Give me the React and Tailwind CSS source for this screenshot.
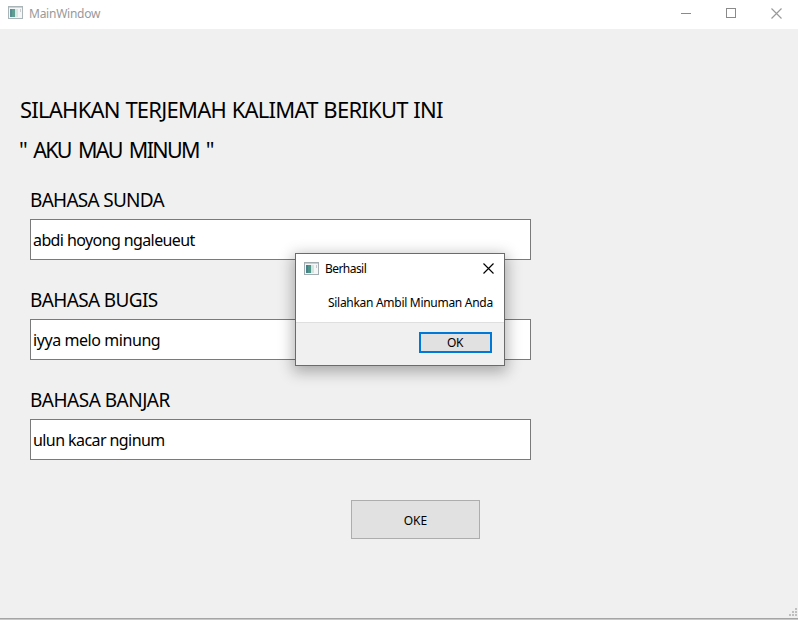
function AppIcon({ className }) {
  return (
    <svg className={className} width="16" height="14" viewBox="0 0 16 14" shapeRendering="crispEdges">
      <rect x="0.5" y="0.5" width="14" height="12" fill="#f4f6f7" stroke="#a3acb1" />
      <rect x="1" y="1" width="13" height="1" fill="#c5d0d8" />
      <rect x="2" y="3" width="5" height="8" fill="#4f9488" />
      <rect x="2" y="3" width="2" height="8" fill="#487f88" />
      <rect x="7" y="3" width="3" height="8" fill="#d3e5df" />
      <rect x="12" y="3" width="1" height="3" fill="#c3c8cb" />
    </svg>
  );
}

function CloseIcon({ className }) {
  return (
    <svg className={className} width="11" height="11" viewBox="0 0 11 11" fill="none" stroke="currentColor" strokeWidth="1.15">
      <path d="M0.5 0.5 10.5 10.5M10.5 0.5 0.5 10.5" />
    </svg>
  );
}

function Field({ label, value, labelClass, valueClass }) {
  return (
    <div className="flex h-[100px] flex-col">
      <label className={`flex h-10 items-center whitespace-pre pt-[2px] text-[19px] leading-none ${labelClass}`}>
        <span>{label}</span>
      </label>
      <div className="flex h-[41px] w-[501px] items-center border border-[#7a7a7a] bg-white pl-[2px]">
        <span className={`whitespace-pre text-[16px] leading-none ${valueClass}`}>{value}</span>
      </div>
    </div>
  );
}

function Dialog() {
  return (
    <div className="absolute left-[295px] top-[253px] flex h-[113px] w-[210px] flex-col border border-[#6b6b6b] bg-white text-[12px] leading-none shadow-[0_4px_14px_2px_rgba(0,0,0,0.3)]">
      <div className="flex h-[29px] items-center pl-2 pr-[10px]">
        <AppIcon />
        <span className="ml-[5px] flex-1 tracking-[-0.55px]">Berhasil</span>
        <CloseIcon />
      </div>
      <div className="flex h-[39px] items-center pl-8">
        <span className="whitespace-pre tracking-[-0.29px]">Silahkan Ambil Minuman Anda</span>
      </div>
      <div className="flex flex-1 justify-end border-t border-[#dfdfdf] bg-[#f0f0f0] pr-3 pt-[9px]">
        <button className="flex h-[21px] w-[73px] items-center justify-center border-2 border-[#0078d7] bg-[#e1e1e1] pr-px tracking-[-0.3px]">
          OK
        </button>
      </div>
    </div>
  );
}

export default function App() {
  return (
    <div className="relative flex h-[620px] w-[798px] flex-col overflow-hidden bg-[#f0f0f0] font-['Noto_Sans',sans-serif] text-black">
      <header className="flex h-[29px] items-center bg-white pl-2 pr-4 text-[#999999]">
        <AppIcon className="mb-[3px] opacity-90" />
        <span className="mb-[2px] ml-[5px] flex-1 text-[12px] leading-none tracking-[-0.25px]">MainWindow</span>
        <div className="mb-[3px] flex items-center gap-[35px]">
          <span className="h-px w-[10px] bg-[#8a8a8a]" />
          <span className="h-[10px] w-[10px] border border-[#8a8a8a]" />
          <CloseIcon />
        </div>
      </header>
      <main className="flex flex-1 flex-col pt-[60px]">
        <h1 className="flex h-10 items-center whitespace-pre pl-5 text-[22px] leading-none tracking-[-0.75px] [word-spacing:0.6px]">
          SILAHKAN TERJEMAH KALIMAT BERIKUT INI
        </h1>
        <h2 className="flex h-10 items-center whitespace-pre pl-[19px] pt-[2px] text-[21.5px] leading-none tracking-[-1.7px] [word-spacing:3.2px]">
          {'" AKU MAU MINUM "'}
        </h2>
        <div className="flex flex-col pl-[30px] pt-[10px]">
          <Field label="BAHASA SUNDA" value="abdi hoyong ngaleueut" labelClass="tracking-[-0.72px]" valueClass="tracking-[-0.6px]" />
          <Field label="BAHASA BUGIS" value="iyya melo minung" labelClass="tracking-[-0.63px]" valueClass="tracking-[-0.43px]" />
          <Field label="BAHASA BANJAR" value="ulun kacar nginum" labelClass="tracking-[-0.5px]" valueClass="tracking-[-0.58px]" />
        </div>
        <button className="ml-[351px] mt-[21px] flex h-[39px] w-[129px] items-center justify-center border border-[#adadad] bg-[#e1e1e1] pt-[2px] text-[12px] leading-none">
          OKE
        </button>
      </main>
      <footer className="flex flex-col items-end">
        <svg className="mb-px" width="9" height="9" viewBox="0 0 9 9" fill="#bfbfbf" shapeRendering="crispEdges">
          <path d="M6 0h2v2H6zM3 3h2v2H3zM6 3h2v2H6zM0 6h2v2H0zM3 6h2v2H3zM6 6h2v2H6z" />
        </svg>
        <div className="h-px w-full bg-[#a5a5a5]" />
        <div className="h-px w-full bg-[#c8c8c8]" />
      </footer>
      <Dialog />
    </div>
  );
}
